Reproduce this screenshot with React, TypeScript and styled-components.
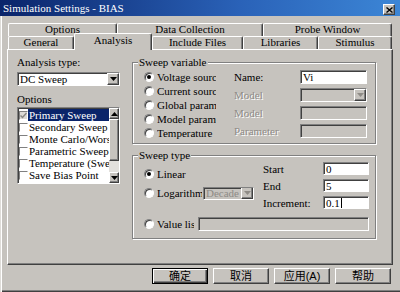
import React from "react";
import styled, { createGlobalStyle, css } from "styled-components";

const FACE = "#c6c3be";
const SHADOW = "#808080";
const DARK = "#404040";
const HILITE = "#ffffff";
const NAVY = "#0a246a";
const FONT = `"Liberation Serif", "Times New Roman", serif`;
const CJK = `"Liberation Sans", "Noto Sans CJK SC", sans-serif`;

const GlobalStyle = createGlobalStyle`
  html, body { margin: 0; padding: 0; background: ${FACE}; }
  body { font-family: ${FONT}; font-size: 11px; color: #000; }
  * { box-sizing: border-box; }
`;

const raised = css`
  border: 1px solid;
  border-color: ${HILITE} ${DARK} ${DARK} ${HILITE};
  box-shadow: inset -1px -1px ${SHADOW};
`;

const sunken = css`
  border: 1px solid;
  border-color: ${SHADOW} ${HILITE} ${HILITE} ${SHADOW};
  box-shadow: inset 1px 1px ${DARK};
`;

const Window = styled.div`
  width: 400px;
  height: 292px;
  background: ${FACE};
  display: flex;
  flex-direction: column;
  overflow: hidden;
`;

const TitleBar = styled.div`
  height: 16px;
  flex: none;
  display: flex;
  background: linear-gradient(90deg, ${NAVY} 0%, #2a62b8 60%, #3c86d6 100%);
  color: #fff;
  padding: 0 5px 0 3px;
`;

const TitleText = styled.span`
  line-height: 16px;
  white-space: nowrap;
`;

const CloseBtn = styled.div`
  margin: 4px 0 0 auto;
  width: 12px;
  height: 11px;
  background: ${FACE};
  ${raised};
  display: flex;
  align-items: center;
  justify-content: center;
`;

const Body = styled.div`
  flex: 1;
  border-left: 1px solid #dedcd8;
  box-shadow: inset 1px 0 ${HILITE}, inset 0 -1px ${DARK}, inset 0 -2px ${SHADOW};
  padding: 7px 7px 0 6px;
  display: flex;
  flex-direction: column;
`;

const Tabs = styled.div`
  display: flex;
  flex-direction: column;
  padding-left: 1px;
`;

const TabRow = styled.div`
  display: flex;
  height: 13px;
  align-items: flex-start;
`;

const Tab = styled.div<{ $w: number; $active?: boolean }>`
  width: ${(p) => p.$w}px;
  height: 13px;
  flex: none;
  background: ${FACE};
  border-top: 1px solid ${HILITE};
  border-left: 1px solid ${HILITE};
  border-right: 1px solid ${DARK};
  border-radius: 2px 2px 0 0;
  box-shadow: inset -1px 0 ${SHADOW};
  display: flex;
  align-items: center;
  justify-content: center;
  line-height: 11px;
  padding-bottom: 1px;
  white-space: nowrap;
  ${(p) =>
    p.$active &&
    css`
      height: 17px;
      margin-top: -3px;
      padding-bottom: 3px;
      position: relative;
      z-index: 1;
    `}
`;

const Panel = styled.div`
  width: 386px;
  height: 216px;
  flex: none;
  border: 1px solid;
  border-color: ${HILITE} ${DARK} ${DARK} ${HILITE};
  box-shadow: inset -1px -1px ${SHADOW};
  display: flex;
  gap: 12px;
  padding: 6px 0 0 9px;
`;

const LeftCol = styled.div`
  width: 103px;
  display: flex;
  flex-direction: column;
`;

const Label = styled.div<{ $top?: number; $disabled?: boolean }>`
  line-height: 12px;
  height: 12px;
  white-space: nowrap;
  margin-top: ${(p) => p.$top ?? 0}px;
  ${(p) =>
    p.$disabled &&
    css`
      color: #8e8b86;
      text-shadow: 1px 1px ${HILITE};
    `}
`;

const Field = styled.div<{ $disabled?: boolean; $h?: number; $top?: number }>`
  height: ${(p) => p.$h ?? 14}px;
  margin-top: ${(p) => p.$top ?? 0}px;
  ${sunken};
  background: ${(p) => (p.$disabled ? FACE : "#fff")};
  padding-left: 2px;
  line-height: 12px;
  white-space: nowrap;
  overflow: hidden;
  display: flex;
  align-items: center;
  min-width: 0;
`;

const Combo = styled(Field)`
  padding-right: 0;
`;

const DropBtn = styled.span`
  margin-left: auto;
  width: 12px;
  height: 12px;
  flex: none;
  background: ${FACE};
  ${raised};
  display: flex;
  align-items: center;
  justify-content: center;
`;

const Caret = styled.span`
  width: 1px;
  height: 10px;
  background: #000;
  margin-left: 1px;
`;

const ListBox = styled.div`
  height: 77px;
  margin-top: 2px;
  ${sunken};
  background: #fff;
  display: flex;
`;

const Items = styled.div`
  flex: 1;
  min-width: 0;
  padding: 1px 0 0 1px;
  display: flex;
  flex-direction: column;
`;

const Item = styled.div`
  display: flex;
  align-items: center;
  height: 12px;
`;

const Check = styled.span<{ $dim?: boolean }>`
  width: 9px;
  height: 9px;
  flex: none;
  border: 1px solid;
  border-color: ${SHADOW} ${HILITE} ${HILITE} ${SHADOW};
  background: ${(p) => (p.$dim ? "#dcdad6" : "#fff")};
  display: flex;
  align-items: center;
  justify-content: center;
`;

const ItemText = styled.span<{ $selected?: boolean }>`
  flex: 1;
  height: 12px;
  line-height: 12px;
  padding-left: 1px;
  white-space: nowrap;
  overflow: hidden;
  ${(p) =>
    p.$selected &&
    css`
      background: ${NAVY};
      color: #fff;
    `}
`;

const ScrollBar = styled.div`
  width: 10px;
  flex: none;
  display: flex;
  flex-direction: column;
  background: #e2e0dc;
`;

const ScrollBtn = styled.div`
  height: 11px;
  flex: none;
  background: ${FACE};
  ${raised};
  display: flex;
  align-items: center;
  justify-content: center;
`;

const Thumb = styled.div`
  height: 42px;
  flex: none;
  background: ${FACE};
  ${raised};
`;

const Track = styled.div`
  flex: 1;
`;

const RightCol = styled.div`
  width: 244px;
  display: flex;
  flex-direction: column;
  gap: 5px;
`;

const Group = styled.fieldset<{ $h: number }>`
  margin: 0;
  min-width: 0;
  width: 244px;
  height: ${(p) => p.$h}px;
  padding: 0 6px 0 11px;
  border: 1px solid ${SHADOW};
  box-shadow: inset 1px 1px ${HILITE}, 1px 1px ${HILITE};
`;

const Legend = styled.legend`
  margin-left: -6px;
  padding: 0 1px;
  line-height: 12px;
  background: ${FACE};
`;

const GroupBody = styled.div<{ $top?: number }>`
  display: flex;
  margin-top: ${(p) => p.$top ?? 0}px;
`;

const RadioCol = styled.div<{ $w: number; $top?: number; $gap?: number }>`
  width: ${(p) => p.$w}px;
  flex: none;
  display: flex;
  flex-direction: column;
  padding-top: ${(p) => p.$top ?? 0}px;
  gap: ${(p) => p.$gap ?? 0}px;
`;

const RadioRow = styled.div<{ $top?: number }>`
  display: flex;
  align-items: center;
  height: 14px;
  margin-top: ${(p) => p.$top ?? 0}px;
`;

const RadioDot = styled.span<{ $on?: boolean }>`
  width: 10px;
  height: 10px;
  flex: none;
  border-radius: 50%;
  background: #fff;
  border: 1px solid;
  border-color: ${SHADOW} ${HILITE} ${HILITE} ${SHADOW};
  box-shadow: inset 1px 1px ${DARK};
  position: relative;
  ${(p) =>
    p.$on &&
    css`
      &::after {
        content: "";
        position: absolute;
        left: 2px;
        top: 2px;
        width: 4px;
        height: 4px;
        border-radius: 50%;
        background: #000;
      }
    `}
`;

const RadioText = styled.span<{ $w: number }>`
  margin-left: 3px;
  width: ${(p) => p.$w}px;
  flex: none;
  overflow: hidden;
  white-space: nowrap;
  line-height: 12px;
`;

const FieldGrid = styled.div<{ $cols: string; $left?: number; $top?: number; $row: number }>`
  display: grid;
  grid-template-columns: ${(p) => p.$cols};
  grid-auto-rows: ${(p) => p.$row}px;
  row-gap: 4px;
  align-items: center;
  margin-left: ${(p) => p.$left ?? 0}px;
  margin-top: ${(p) => p.$top ?? 0}px;
  align-self: flex-start;
`;

const DecadeCombo = styled(Combo)`
  width: 51px;
  margin-left: 1px;
  color: #8e8b86;
`;

const ValueField = styled(Field)`
  flex: 1;
  margin-left: 4px;
`;

const Buttons = styled.div`
  display: flex;
  justify-content: flex-end;
  gap: 5px;
  margin-top: 3px;
  padding-right: 2px;
`;

const Btn = styled.button<{ $default?: boolean }>`
  width: 56px;
  height: 16px;
  padding: 0;
  font-family: ${CJK};
  font-size: 11px;
  line-height: 14px;
  color: #000;
  background: ${FACE};
  ${raised};
  ${(p) =>
    p.$default &&
    css`
      border: 1px solid #000;
      box-shadow: inset 1px 1px ${HILITE}, inset -1px -1px ${DARK}, inset -2px -2px ${SHADOW};
    `}
`;

const Arrow = ({ up, color = "#000" }: { up?: boolean; color?: string }) => (
  <svg width="7" height="4" viewBox="0 0 7 4">
    <polygon points={up ? "3.5,0 7,4 0,4" : "0,0 7,0 3.5,4"} fill={color} />
  </svg>
);

const backTabs = [
  { label: "Options", w: 109 },
  { label: "Data Collection", w: 146 },
  { label: "Probe Window", w: 129 },
];

const frontTabs = [
  { label: "General", w: 66 },
  { label: "Analysis", w: 78, active: true },
  { label: "Include Files", w: 91 },
  { label: "Libraries", w: 75 },
  { label: "Stimulus", w: 74 },
];

const options = [
  "Primary Sweep",
  "Secondary Sweep",
  "Monte Carlo/Worst Case",
  "Parametric Sweep",
  "Temperature (Sweep)",
  "Save Bias Point",
];

const sweepVars = [
  { label: "Voltage source", on: true },
  { label: "Current source" },
  { label: "Global parameter" },
  { label: "Model parameter" },
  { label: "Temperature" },
];

export default function App() {
	return (
		<Window>
			<GlobalStyle />
			<TitleBar>
				<TitleText>Simulation Settings - BIAS</TitleText>
				<CloseBtn>
					<svg width="7" height="6" viewBox="0 0 7 6">
						<path d="M0.5 0.5 L6.5 5.5 M6.5 0.5 L0.5 5.5" stroke="#000" strokeWidth="1.4" />
					</svg>
				</CloseBtn>
			</TitleBar>
			<Body>
				<Tabs>
					<TabRow>
						{backTabs.map((t) => (
							<Tab key={t.label} $w={t.w}>
								{t.label}
							</Tab>
						))}
					</TabRow>
					<TabRow>
						{frontTabs.map((t) => (
							<Tab key={t.label} $w={t.w} $active={t.active}>
								{t.label}
							</Tab>
						))}
					</TabRow>
				</Tabs>
				<Panel>
					<LeftCol>
						<Label>Analysis type:</Label>
						<Combo $top={4}>
							DC Sweep
							<DropBtn>
								<Arrow />
							</DropBtn>
						</Combo>
						<Label $top={7}>Options</Label>
						<ListBox>
							<Items>
								{options.map((o, i) => (
									<Item key={o}>
										<Check $dim={i === 0}>
											{i === 0 && (
												<svg width="7" height="7" viewBox="0 0 7 7">
													<path d="M0.5 3.5 L2.5 5.5 L6.5 1" stroke="#8a8884" strokeWidth="1.5" fill="none" />
												</svg>
											)}
										</Check>
										<ItemText $selected={i === 0}>{o}</ItemText>
									</Item>
								))}
							</Items>
							<ScrollBar>
								<ScrollBtn>
									<Arrow up />
								</ScrollBtn>
								<Thumb />
								<Track />
								<ScrollBtn>
									<Arrow />
								</ScrollBtn>
							</ScrollBar>
						</ListBox>
					</LeftCol>
					<RightCol>
						<Group $h={88}>
							<Legend>Sweep variable</Legend>
							<GroupBody $top={2}>
								<RadioCol $w={72}>
									{sweepVars.map((v) => (
										<RadioRow key={v.label}>
											<RadioDot $on={v.on} />
											<RadioText $w={59}>{v.label}</RadioText>
										</RadioRow>
									))}
								</RadioCol>
								<FieldGrid $cols="66px 67px" $left={18} $row={14}>
									<Label>Name:</Label>
									<Field>Vi</Field>
									<Label $disabled>Model</Label>
									<Combo $disabled>
										<DropBtn>
											<Arrow color="#8e8b86" />
										</DropBtn>
									</Combo>
									<Label $disabled>Model</Label>
									<Field $disabled />
									<Label $disabled>Parameter</Label>
									<Field $disabled />
								</FieldGrid>
							</GroupBody>
						</Group>
						<Group $h={90}>
							<Legend>Sweep type</Legend>
							<GroupBody>
								<RadioCol $w={112} $top={6} $gap={5}>
									<RadioRow>
										<RadioDot $on />
										<RadioText $w={45}>Linear</RadioText>
									</RadioRow>
									<RadioRow>
										<RadioDot />
										<RadioText $w={45}>Logarithmic</RadioText>
										<DecadeCombo $disabled $h={13}>
											Decade
											<DropBtn>
												<Arrow color="#8e8b86" />
											</DropBtn>
										</DecadeCombo>
									</RadioRow>
								</RadioCol>
								<FieldGrid $cols="60px 46px" $left={7} $top={1} $row={13}>
									<Label>Start</Label>
									<Field $h={13}>0</Field>
									<Label>End</Label>
									<Field $h={13}>5</Field>
									<Label>Increment:</Label>
									<Field $h={13}>
										0.1
										<Caret />
									</Field>
								</FieldGrid>
							</GroupBody>
							<RadioRow $top={8}>
								<RadioDot />
								<RadioText $w={37}>Value list</RadioText>
								<ValueField $disabled />
							</RadioRow>
						</Group>
					</RightCol>
				</Panel>
				<Buttons>
					<Btn $default>确定</Btn>
					<Btn>取消</Btn>
					<Btn>应用(A)</Btn>
					<Btn>帮助</Btn>
				</Buttons>
			</Body>
		</Window>
	);
}
